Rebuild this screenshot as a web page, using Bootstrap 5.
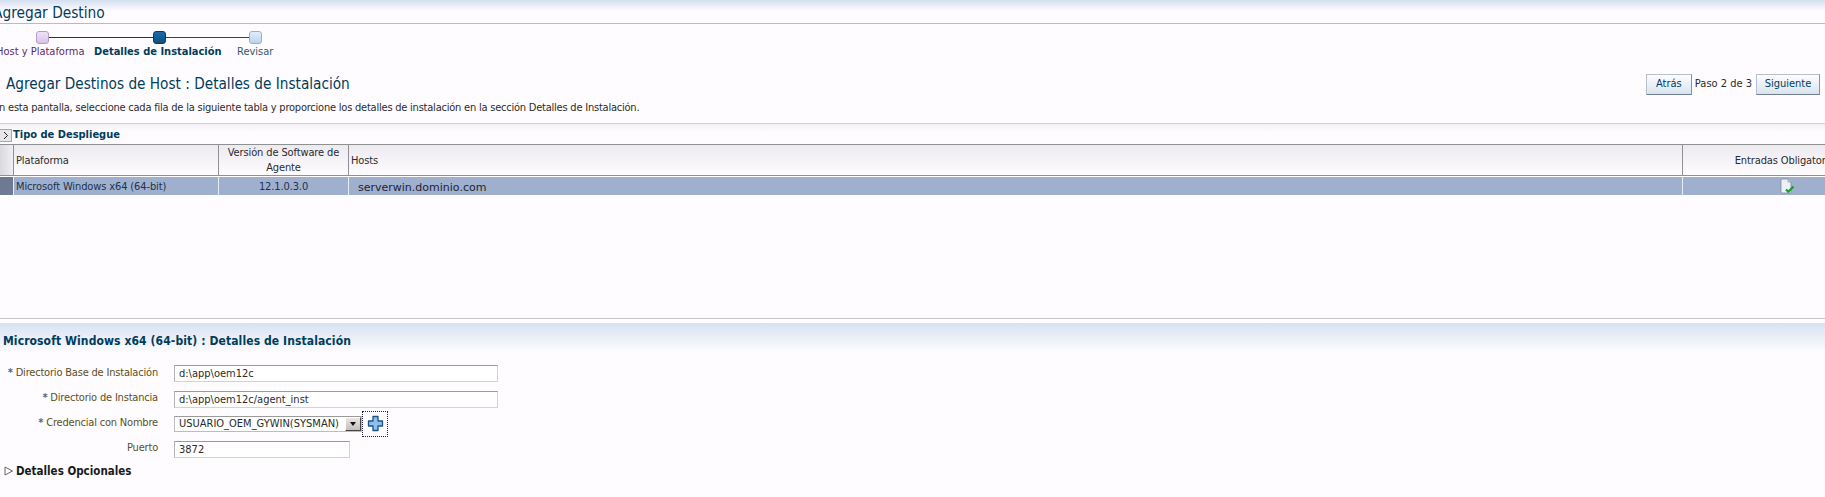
<!DOCTYPE html>
<html lang="es">
<head>
<meta charset="utf-8">
<title>Agregar Destino</title>
<link href="https://cdn.jsdelivr.net/npm/bootstrap@5.3.0/dist/css/bootstrap.min.css" rel="stylesheet">
<style>
html,body{height:497px;overflow:hidden;background:#fffcff}
body{font-family:"DejaVu Sans Condensed","DejaVu Sans",sans-serif;font-size:11px;color:#2b2b2b;line-height:14px}
.top-band{height:24px;background:linear-gradient(#d3dff0,#fffcff 11px);border-bottom:1px solid #b9bcbc}
.app-title{font-size:15.300px;line-height:20px;color:#003d5b;margin:0 0 0 -7px;font-weight:400}
.train-nodes{height:14px;margin:6px 0 0 36px;align-items:center}
.t-node{width:13px;height:13px;border-radius:3px;flex:none}
.n-done{background:linear-gradient(#efe2f7,#d9c3ea);border:1px solid #b79cc9}
.n-cur{background:linear-gradient(#1d6aa5,#0f4f80);border:1px solid #0b3a5e}
.n-next{background:linear-gradient(#e3eefa,#b9d2ee);border:1px solid #8fb2d6}
.t-line{height:1px}
.l-done{width:104px;background:#4b1d5c}
.l-cur{width:83px;background:#0f4f80}
.train-labels{margin:1px 0 0 -4px;font-size:11px}
.lb-done{color:#5b2a70;width:98px}
.lb-cur{color:#003d5b;font-weight:700;width:143px}
.lb-next{color:#36566e}
.head-row{margin-top:10px;height:31px;padding-right:5px;padding-bottom:1px}
.page-h{font-size:15.200px;line-height:20px;color:#003d5b;margin:0 0 0 6px;font-weight:400}
.oj-btn{font-size:11px;line-height:14px;color:#003d5b;padding:2px 0 3px;height:21px;border:1px solid #b6c0cc;border-bottom-color:#6f7f90;border-right-color:#8494a5;border-radius:0;background:linear-gradient(#fdfdfe,#d9e3ee);box-shadow:none}
.btn-back{width:46px}
.btn-next{width:64px}
.step-count{margin:0 4px 0 3px}
.instr{margin:0 0 0 -7px;height:16px;line-height:16px;letter-spacing:-.22px}
.dep-head{border-top:1px solid #cfd1d1;margin-top:7px;height:21px;padding-top:2px;background:linear-gradient(#f4f1f6,#fffcff 8px);gap:1px}
.tog{width:12px;height:13px;background:#e7e6e8;border:1px solid #a7a7a7;border-left:0;font-size:0}
.dep-title{font-weight:700;color:#003d5b;font-size:11px}
.grid-wrap{width:1892px;height:175px;border-bottom:1px solid #c4c6c6}
.dep-table{table-layout:fixed;width:1892px;margin:0;border-collapse:separate;border-spacing:0}
.dep-table>*>*>*{padding:0;background:transparent;box-shadow:none;border:0;font-size:11px;color:#2b2b2b;line-height:15px;font-weight:400;vertical-align:middle;letter-spacing:-.12px}
.dep-table thead th{height:30px;background:linear-gradient(#eceaf0,#fffcff);border-top:1px solid #8f9191;border-bottom:1px solid #8f9191;border-right:1px solid #8f9191;padding:0 2px}
.dep-table thead th:first-child{padding:0;background:linear-gradient(90deg,#d9d9de,#f0eff2)}
.dep-table tbody td{height:19px;background:#9fb0cf;border-top:1px solid #fff;border-right:1px solid #e8edf5;padding:0 2px;color:#22304a}
.dep-table tbody td:first-child{background:#6d7a92;padding:0}
.dep-table tbody td.host-cell{font-size:11px;font-family:"DejaVu Sans",sans-serif;padding:2px 0 0 9px;color:#1c2433;letter-spacing:0}
.sec-band{margin-top:4px;height:30px;background:linear-gradient(#d6e2f2,#fffcff);padding:10px 0 0 3px}
.sec-h{font-size:12px;font-weight:700;color:#003d5b;margin:0;line-height:16px;letter-spacing:.1px}
.f-row{display:flex;align-items:center;gap:16px;height:17px;margin-top:8.500px}
.f-first{margin-top:12px}
.f-label{width:158px;flex:none;text-align:right;color:#5b4f1e;margin:0 0 2px;letter-spacing:-.19px}
.req{color:#3d6c93;font-weight:700}
.f-in{font-size:11px;height:17px;padding:1px 4px;border:1px solid #d3d3d3;border-top-color:#9a9a9a;border-left-color:#b4b4b4;border-radius:0;line-height:14px;color:#2b2b2b;box-shadow:none;flex:none;font-family:inherit;background:#fff}
.w-long{width:324px}
.w-short{width:176px}
.fake-sel{width:188px;height:16px;border:1px solid #bdbdbd;border-top-color:#9a9a9a;background:#fff;padding-left:4px;line-height:14px;flex:none}
.sel-arrow{width:16px;height:14px;background:linear-gradient(#e9e7e2,#c4c0b8);border:1px solid #fff;border-right-color:#444;border-bottom-color:#444;margin:0;padding:0;border-radius:0}
.plus-box{width:26px;height:26px;border:1px dotted #20204a;flex:none}
.row-cred{margin-top:7.500px;margin-bottom:1px}
.opt-row{margin:6px 0 0 4px;gap:2px;font-weight:700;color:#1a1a1a;font-size:11.500px}
</style>
</head>
<body>
<div class="top-band d-flex align-items-end"><h1 class="app-title">Agregar Destino</h1></div>

<div class="train-nodes d-flex">
  <span class="t-node n-done"></span><span class="t-line l-done"></span>
  <span class="t-node n-cur"></span><span class="t-line l-cur"></span>
  <span class="t-node n-next"></span>
</div>
<div class="train-labels d-flex">
  <span class="lb-done">Host y Plataforma</span>
  <span class="lb-cur">Detalles de Instalación</span>
  <span class="lb-next">Revisar</span>
</div>

<div class="head-row d-flex justify-content-between align-items-center">
  <h2 class="page-h">Agregar Destinos de Host : Detalles de Instalación</h2>
  <div class="d-flex align-items-center">
    <button type="button" class="btn oj-btn btn-back">Atrás</button>
    <span class="step-count">Paso 2 de 3</span>
    <button type="button" class="btn oj-btn btn-next">Siguiente</button>
  </div>
</div>
<p class="instr">En esta pantalla, seleccione cada fila de la siguiente tabla y proporcione los detalles de instalación en la sección Detalles de Instalación.</p>

<div class="dep-head d-flex align-items-center">
  <span class="tog d-flex align-items-center justify-content-center"><svg width="6" height="9" viewBox="0 0 6 9"><path d="M1 1l3.500 3.500L1 8" fill="none" stroke="#222" stroke-width="1"/></svg></span>
  <span class="dep-title">Tipo de Despliegue</span>
</div>

<div class="grid-wrap">
<table class="table dep-table">
  <colgroup><col style="width:14px"><col style="width:205px"><col style="width:130px"><col style="width:1334px"><col style="width:209px"></colgroup>
  <thead><tr>
    <th></th><th>Plataforma</th><th class="text-center">Versión de Software de Agente</th><th>Hosts</th><th class="text-center">Entradas Obligatorias</th>
  </tr></thead>
  <tbody><tr>
    <td></td><td>Microsoft Windows x64 (64-bit)</td><td class="text-center">12.1.0.3.0</td><td class="host-cell">serverwin.dominio.com</td>
    <td class="text-center"><svg width="16" height="16" viewBox="0 0 16 16" class="d-block mx-auto"><path d="M2 1h7l3 3v11H2z" fill="#eef0f5" stroke="#7d8aa3" stroke-width=".8"/><path d="M9 1v3h3" fill="#cfd6e2" stroke="#7d8aa3" stroke-width=".6"/><path d="M7 11.500l2.300 2.300L14.500 8.500" fill="none" stroke="#1f9a33" stroke-width="2.200"/></svg></td>
  </tr></tbody>
</table>
</div>

<div class="sec-band"><h2 class="sec-h">Microsoft Windows x64 (64-bit) : Detalles de Instalación</h2></div>

<div class="f-row f-first">
  <label class="f-label"><span class="req">*</span> Directorio Base de Instalación</label>
  <input class="form-control f-in w-long" value="d:\app\oem12c">
</div>
<div class="f-row">
  <label class="f-label"><span class="req">*</span> Directorio de Instancia</label>
  <input class="form-control f-in w-long" value="d:\app\oem12c/agent_inst">
</div>
<div class="f-row row-cred">
  <label class="f-label"><span class="req">*</span> Credencial con Nombre</label>
  <div class="d-flex align-items-center">
    <div class="fake-sel d-flex align-items-center justify-content-between">USUARIO_OEM_GYWIN(SYSMAN)<span class="sel-arrow d-flex align-items-center justify-content-center"><svg width="6" height="4" viewBox="0 0 6 4"><path d="M0 0h6L3 4z" fill="#111"/></svg></span></div>
    <span class="plus-box d-flex align-items-center justify-content-center"><svg width="17" height="17" viewBox="0 0 17 17"><path d="M6 1.500h5v4.500h4.500v5H11v4.500H6V11H1.500V6H6z" fill="#8cc0ee" stroke="#1f4f86" stroke-width="1.300" stroke-linejoin="round"/></svg></span>
  </div>
</div>
<div class="f-row">
  <label class="f-label">Puerto</label>
  <input class="form-control f-in w-short" value="3872">
</div>
<div class="opt-row d-flex align-items-center">
  <svg width="10" height="10" viewBox="0 0 10 10"><path d="M1 1l7.500 4L1 9z" fill="#fff" stroke="#666"/></svg>
  <span>Detalles Opcionales</span>
</div>
</body>
</html>
